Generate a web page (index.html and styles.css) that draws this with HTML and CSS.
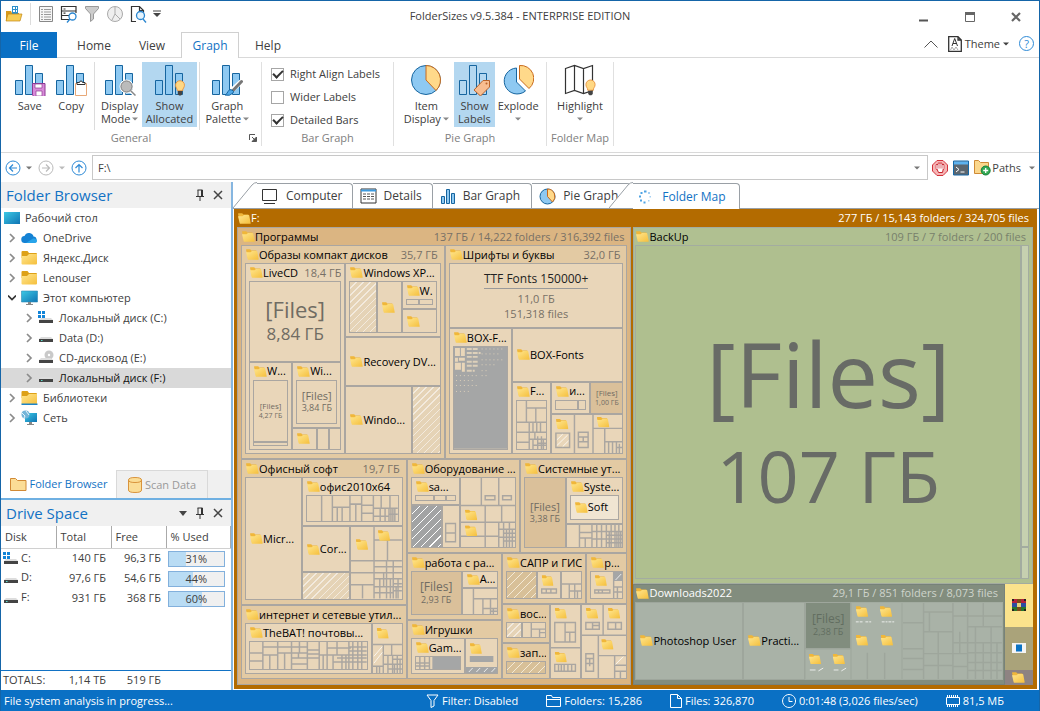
FILE: index.html
```html
<!DOCTYPE html>
<html lang="en">
<head>
<meta charset="utf-8">
<title>FolderSizes v9.5.384 - ENTERPRISE EDITION</title>
<link rel="stylesheet" href="styles.css">
</head>
<body>
<svg class="sprite" aria-hidden="true">
  <defs>
    <linearGradient id="gy" x1="0" y1="0" x2="1" y2="1"><stop offset="0" stop-color="#ffe68e"/><stop offset="1" stop-color="#f5bf3c"/></linearGradient>
    <linearGradient id="gb" x1="0" y1="0" x2="1" y2="1"><stop offset="0" stop-color="#3cc8e4"/><stop offset="1" stop-color="#0f74b4"/></linearGradient>
  </defs>
  <symbol id="f" viewBox="0 0 13 11"><path d="M0 .8q0-.6.6-.6h3.600l1.200 1.300H10q.6 0 .6.600V8L2 9.500z" fill="#f0b73a"/><path d="M0 3.200h4.500L6 2h4.500q.7 0 .8.7l1.400 7.500q.1.600-.5.600H2.500q-.6 0-.8-.6z" fill="url(#gy)"/></symbol>
  <symbol id="bars" viewBox="0 0 32 32"><g fill="#8ec9f2" stroke="#16659f"><path d="M1.500 16.500h7v14h-7zM11.500 1.500h7v29h-7zM21.500 9.500h7v21h-7z"/></g></symbol>
  <symbol id="folder" viewBox="0 0 17 16"><path d="M.5 2q0-1 1-1h5l1.500 2H15q1 0 1 1v4H.5z" fill="#dda117"/><path d="M.5 6H6l2-2h8v9.500q0 1-1 1H1.500q-1 0-1-1z" fill="url(#gy)"/></symbol>
  <symbol id="drive" viewBox="0 0 16 16"><path d="M3 7h10l2 2H1z" fill="#ddd"/><path d="M1 9h14v3H1z" fill="#444"/><path d="M3 10h1.500v1H3z" fill="#5fe0d0"/></symbol>
  <symbol id="drivec" viewBox="0 0 16 16"><path d="M3 8h10l2 2H1z" fill="#ddd"/><path d="M1 10h14v3H1z" fill="#444"/><path d="M0 1h3v3H0zM4 1h3v3H4zM0 5h3v3H0zM4 5h3v3H4z" fill="#1284d8"/></symbol>
  <symbol id="cd" viewBox="0 0 16 16"><circle cx="11" cy="5" r="4.500" fill="#c9c9c9"/><circle cx="11" cy="5" r="1.200" fill="#fff"/><path d="M3 8h10l2 2H1z" fill="#ddd"/><path d="M1 10h14v3H1z" fill="#444"/></symbol>
  <symbol id="chev" viewBox="0 0 8 10"><path d="M2 1l4 4-4 4" fill="none" stroke="#8b8b8b" stroke-width="1.700"/></symbol>
  <symbol id="down" viewBox="0 0 6 4"><path d="M0 .5h6L3 3.500z" fill="currentColor"/></symbol>
  <symbol id="pin" viewBox="0 0 10 12"><path d="M2.500 1h5M3 1v6M1 7.500h8M5 7.500V12" fill="none" stroke="#333"/><path d="M6 1h2v6H6z" fill="#333"/></symbol>
  <symbol id="x" viewBox="0 0 10 10"><path d="M1 1l8 8M9 1L1 9" stroke="#444" stroke-width="1.500"/></symbol>
  <symbol id="bulb" viewBox="0 0 12 18"><path d="M6 .8a5 5 0 0 0-5 5c0 3 2 3.500 2 6.200h6c0-2.700 2-3.200 2-6.200a5 5 0 0 0-5-5z" fill="#ffd884" stroke="#e8923c"/><path d="M3.500 12.500h5V16L7 17.500H5L3.500 16z" fill="#444"/></symbol>
  <symbol id="pie" viewBox="0 0 32 32"><circle cx="16" cy="16" r="14.500" fill="#8ec9f2" stroke="#16659f"/><path d="M16 1.500A14.500 14.500 0 0 1 26 26.500L16 16z" fill="#ffd98a" stroke="#c96a1c"/></symbol>
</svg>

<header class="title">
  <div class="quick">
    <svg width="18" height="18" viewBox="0 0 18 18"><path d="M1 6h5l1 2h7v8H1z" fill="#d99a1b"/><path d="M7 1h6v11H7z" fill="#2d8fca"/><path d="M8 2h2v2H8zM11 2h1v2h-1zM8 5h2v2H8zM11 5h1v2h-1z" fill="#fff"/><path d="M3 9h14l-2 7H1z" fill="#f7cd54" stroke="#c38716" stroke-width=".7"/></svg>
    <i class="vr"></i>
    <svg width="16" height="18" viewBox="0 0 16 18"><path d="M1.500 1.500h13v15h-13z" fill="#f6f6f6" stroke="#888"/><path d="M3 4.500h2M6 4.500h7M3 7h2M6 7h7M3 9.500h2M6 9.500h7M3 12h2M6 12h7M3 14.500h2M6 14.500h7" stroke="#999"/></svg>
    <svg width="18" height="18" viewBox="0 0 18 18"><path d="M16 8V1.500H1.500v13H9M1.500 6H16M1.500 10.500H9M3.500 4h2M3.500 8.200h2" fill="none" stroke="#333" stroke-width="1.200"/><circle cx="12.500" cy="11.500" r="3.500" fill="#fff" stroke="#2a86d0" stroke-width="1.300"/><path d="M10 14l-3 3.500" stroke="#2a86d0" stroke-width="1.300"/></svg>
    <svg width="16" height="18" viewBox="0 0 16 18"><path d="M1.500 1.500h13v2L9.500 9v5l-3 2.500V9l-5-5.500z" fill="#ccc" stroke="#999"/></svg>
    <svg width="18" height="18" viewBox="0 0 18 18"><circle cx="9" cy="9" r="7.500" fill="#eee" stroke="#aaa"/><path d="M9 2v7l5 5M9 9l-3 6" fill="none" stroke="#aaa"/></svg>
    <svg width="17" height="18" viewBox="0 0 17 18"><path d="M6 16.500H1.500v-15h8l4 4V8M9.500 1.500v4h4" fill="none" stroke="#333" stroke-width="1.200"/><circle cx="10.500" cy="10.500" r="4" fill="#e4f3fd" stroke="#2a86d0" stroke-width="1.300"/><path d="M13 14l3 3.500" stroke="#2a86d0" stroke-width="1.300"/></svg>
    <svg width="8" height="7" viewBox="0 0 8 7"><path d="M0 1h8" stroke="#444"/><path d="M0 3h8L4 7z" fill="#444"/></svg>
  </div>
  <h1>FolderSizes v9.5.384 - ENTERPRISE EDITION</h1>
  <div class="winbtns">
    <button aria-label="Minimize"><svg width="10" height="10"><path d="M0 8.500h9" stroke="#555" stroke-width="2"/></svg></button>
    <button aria-label="Maximize"><svg width="10" height="10"><path d="M.5 1h9v8.500h-9z" fill="none" stroke="#666"/><path d="M0 1.500h10" stroke="#666" stroke-width="3"/></svg></button>
    <button aria-label="Close"><svg width="10" height="10"><path d="M1 1l8 8M9 1L1 9" stroke="#666" stroke-width="2.200"/></svg></button>
  </div>
</header>

<nav class="menu">
  <button class="file">File</button><button>Home</button><button>View</button><button class="on">Graph</button><button>Help</button>
  <div class="menu-right">
    <button aria-label="Collapse ribbon"><svg width="14" height="8"><path d="M.5 7.500L7 1l6.500 6.500" fill="none" stroke="#555"/></svg></button>
    <button><svg width="14" height="16"><path d="M.7.7h9.300l3.300 3.300v11.300H.7zM10 1v3h3" fill="none" stroke="#333" stroke-width="1.300"/><path d="M4 10l2.700-7.500L9.500 10M5 7.500h3.500" fill="none" stroke="#333"/><path d="M2.500 14l1.500-3 2 3 2-3 2 3" fill="none" stroke="#aaa"/></svg>Theme<svg width="6" height="4"><use href="#down"/></svg></button>
    <button class="help" aria-label="Help">?</button>
  </div>
</nav>

<section class="ribbon">
  <div class="group general">
    <div class="items">
      <button><svg width="32" height="32"><use href="#bars"/><path d="M18.500 19.500H31v13H20l-1.500-1.500z" fill="#d88ad8" stroke="#8d3a94"/><path d="M21 20h7v4h-7zM22 27h6v5h-6z" fill="#fff" stroke="#8d3a94" stroke-width=".7"/></svg>Save</button>
      <button><svg width="32" height="32"><use href="#bars"/><path d="M20.500 19.500h11v12h-11z" fill="#fff" stroke="#e8a878"/><path d="M22 20.500h8v-2h-2.500a1.500 1.500 0 0 0-3 0H22z" fill="#fff" stroke="#333"/></svg>Copy</button>
      <i class="vr"></i>
      <button class="mid"><svg width="32" height="32"><use href="#bars"/><path d="M26 26l5 5" stroke="#fff" stroke-width="4"/><circle cx="22.500" cy="22.500" r="6.500" fill="#bbb" stroke="#fff"/><circle cx="22.500" cy="22.500" r="5.500" fill="#bbb" stroke="#888"/><path d="M26.500 26.500l5 5" stroke="#888" stroke-width="1.500"/></svg>Display<span>Mode<svg width="6" height="4"><use href="#down"/></svg></span></button>
      <button class="on wide"><svg width="32" height="32"><use href="#bars"/><use href="#bulb" x="20" y="16" width="12" height="16"/></svg>Show<span>Allocated</span></button>
      <i class="vr"></i>
      <button class="mid"><svg width="32" height="32"><use href="#bars"/><path d="M30.500 17.500l-10 9" stroke="#fff" stroke-width="5"/><path d="M30.500 17.500l-8.500 9" stroke="#777" stroke-width="3" stroke-linecap="round"/><path d="M14 31q2-1 3-3.500 1.500-3 4-1.500t1 3q-3 3.500-8 2z" fill="#4fa8e8" stroke="#16659f"/></svg>Graph<span>Palette<svg width="6" height="4"><use href="#down"/></svg></span></button>
    </div>
    <div class="gname">General<svg class="launch" width="8" height="8"><path d="M.5 6V.5H6" fill="none" stroke="#555"/><path d="M3 3l3 3M7.500 3v4.500H3z" stroke="#555" fill="#555"/></svg></div>
  </div>
  <div class="group bar">
    <div class="checks">
      <label><input type="checkbox" checked>Right Align Labels</label>
      <label><input type="checkbox">Wider Labels</label>
      <label><input type="checkbox" checked>Detailed Bars</label>
    </div>
    <div class="gname">Bar Graph</div>
  </div>
  <div class="group pies">
    <div class="items">
      <button class="wide"><svg width="32" height="32"><use href="#pie"/></svg>Item<span>Display<svg width="6" height="4"><use href="#down"/></svg></span></button>
      <button class="on"><svg width="32" height="32"><g fill="none" stroke="#16659f"><path d="M1.500 16.500h7v14h-7zM11.500 1.500h7v29h-7zM21.500 9.500h7v21h-7z"/></g><path d="M16 26l9-9.500h6.500v6.500L22.500 32z" fill="#f8bd90" stroke="#b8632a"/><circle cx="28.500" cy="19.500" r="1" fill="#b8632a"/></svg>Show<span>Labels</span></button>
      <button class="mid"><svg width="32" height="32"><path d="M14.500 4v14l9 9A13 13 0 1 1 14.500 4z" fill="#8ec9f2" stroke="#16659f"/><path d="M17.500 1.500a13 13 0 0 1 9.500 23L17.500 15z" fill="#ffd98a" stroke="#c96a1c"/></svg>Explode<span><svg width="6" height="4"><use href="#down"/></svg></span></button>
    </div>
    <div class="gname">Pie Graph</div>
  </div>
  <div class="group fmap">
    <div class="items">
      <button class="wide"><svg width="32" height="32"><path d="M1.500 4.500L10.500 1.500l9 3 9-3v25l-9 3-9-3-9 3zM10.500 1.500v25M19.500 4.500v25" fill="#fff" stroke="#333" stroke-width="1.200"/><use href="#bulb" x="21" y="15" width="11" height="17"/></svg>Highlight<span><svg width="6" height="4"><use href="#down"/></svg></span></button>
    </div>
    <div class="gname">Folder Map</div>
  </div>
</section>

<div class="address">
  <button aria-label="Back"><svg width="16" height="16"><circle cx="8" cy="8" r="7" fill="#fff" stroke="#2e8ad6"/><path d="M12 8H4.500M8 4.500L4.500 8 8 11.500" fill="none" stroke="#2e8ad6" stroke-width="1.200"/></svg></button>
  <svg width="6" height="4"><use href="#down"/></svg>
  <button aria-label="Forward"><svg width="16" height="16"><circle cx="8" cy="8" r="7" fill="#fff" stroke="#bbb"/><path d="M4 8h7.500M8 4.500L11.500 8 8 11.500" fill="none" stroke="#bbb" stroke-width="1.200"/></svg></button>
  <svg class="dim" width="6" height="4"><use href="#down"/></svg>
  <button aria-label="Up"><svg width="16" height="16"><circle cx="8" cy="8" r="7" fill="#fff" stroke="#2e8ad6"/><path d="M8 12.500V4.500M4.500 8L8 4.500 11.500 8" fill="none" stroke="#2e8ad6" stroke-width="1.200"/></svg></button>
  <div class="combo"><input type="text" value="F:\" aria-label="Path"><button aria-label="Path list"><svg width="6" height="4"><use href="#down"/></svg></button></div>
  <button aria-label="Stop"><svg width="16" height="16"><path d="M5 .5h6L15.500 5v6L11 15.500H5L.5 11V5z" fill="#f6b5b5" stroke="#d3333c"/><path d="M5 8.500V5.200M7 8V3.700M9 8V3.700M11 8.500V5" stroke="#c8202b" stroke-width="2.600" stroke-linecap="round"/><path d="M4.500 8h7l-1 4.500h-4z" fill="#fff" stroke="#c8202b"/><path d="M5 8.500V5.500M7 8.500V4M9 8.500V4M11 8.500V5.500" stroke="#fff" stroke-width="1.300" stroke-linecap="round"/></svg></button>
  <button aria-label="Console"><svg width="16" height="16"><path d="M.5 1h15v14H.5z" fill="#5c6770" stroke="#1669a8"/><path d="M1 1.500h14v3H1z" fill="#5db3f0"/><path d="M3 7l3 2.500L3 12M7.500 12h4" fill="none" stroke="#fff"/></svg></button>
  <button class="paths"><svg width="17" height="17"><path d="M.5 1.500h4l2 2h8v11H.5z" fill="#fbd78c" stroke="#cf8a35"/><circle cx="11.700" cy="11.500" r="4.500" fill="#34a853" stroke="#17803a"/><path d="M11.700 9v5M9.200 11.500h5" stroke="#fff" stroke-width="1.300"/></svg>Paths<svg width="6" height="4"><use href="#down"/></svg></button>
</div>

<main>
  <aside>
    <section class="browser">
      <h2><span>Folder Browser</span><svg width="10" height="12"><use href="#pin"/></svg><svg width="10" height="10"><use href="#x"/></svg></h2>
      <ul class="tree">
        <li class="root"><svg width="16" height="16"><path d="M0 2h16v12H0z" fill="url(#gb)"/></svg>Рабочий стол</li>
        <li><svg width="8" height="10"><use href="#chev"/></svg><svg width="17" height="16"><path d="M4 13a3.500 3.500 0 0 1-.5-7Q5 2.500 8.500 3t4 3.500a3.300 3.300 0 0 1 .5 6.500z" fill="#1482d4"/><path d="M5 13l7-4.500q4-.5 4 2.500 0 2-3 2z" fill="#28a4ea"/></svg>OneDrive</li>
        <li><svg width="8" height="10"><use href="#chev"/></svg><svg width="17" height="16"><use href="#folder"/></svg>Яндекс.Диск</li>
        <li><svg width="8" height="10"><use href="#chev"/></svg><svg width="17" height="16"><use href="#folder"/></svg>Lenouser</li>
        <li><svg width="8" height="8"><path d="M0 1.500l4 4 4-4" fill="none" stroke="#333" stroke-width="1.700"/></svg><svg width="17" height="16"><path d="M.5 1h16v11H.5z" fill="url(#gb)" stroke="#2b8ab5" stroke-width=".6"/><path d="M7 12h3v2H7zM5 14h7v1H5z" fill="#888"/></svg>Этот компьютер</li>
        <li class="sub"><svg width="8" height="10"><use href="#chev"/></svg><svg width="16" height="16"><use href="#drivec"/></svg>Локальный диск (C:)</li>
        <li class="sub"><svg width="8" height="10"><use href="#chev"/></svg><svg width="16" height="16"><use href="#drive"/></svg>Data (D:)</li>
        <li class="sub"><svg width="8" height="10"><use href="#chev"/></svg><svg width="16" height="16"><use href="#cd"/></svg>CD-дисковод (E:)</li>
        <li class="sub sel"><svg width="8" height="10"><use href="#chev"/></svg><svg width="16" height="16"><use href="#drive"/></svg>Локальный диск (F:)</li>
        <li><svg width="8" height="10"><use href="#chev"/></svg><svg width="17" height="16"><use href="#folder"/><path d="M.5 13.500h16V15H.5z" fill="#1d84c8"/></svg>Библиотеки</li>
        <li><svg width="8" height="10"><use href="#chev"/></svg><svg width="17" height="16"><path d="M4 3h12v9H4z" fill="url(#gb)"/><path d="M8 12h3v2H8zM6 14h7v1H6z" fill="#888"/><circle cx="4.500" cy="4.500" r="4" fill="#74b5d8"/><path d="M1 3l3 3-1 2M5 1l3 4" stroke="#e7f5fb" fill="none"/></svg>Сеть</li>
      </ul>
      <div class="sidetabs">
        <button class="on"><svg width="17" height="15"><path d="M.5 1.500h5l2 2h8.500v10H.5z" fill="#fbdd96" stroke="#d28a35"/></svg>Folder Browser</button>
        <button><svg width="14" height="16"><path d="M.5 3v10q0 2.500 6.500 2.500t6.500-2.500V3q0-2.500-6.500-2.500T.5 3z" fill="#fbdd96" stroke="#d9943c"/><path d="M.5 3q0 2.500 6.500 2.500T13.500 3" fill="none" stroke="#d9943c"/></svg>Scan Data</button>
      </div>
    </section>
    <section class="drives">
      <h2><span>Drive Space</span><svg width="8" height="5"><path d="M0 0h8L4 5z" fill="#444"/></svg><svg width="10" height="12"><use href="#pin"/></svg><svg width="10" height="10"><use href="#x"/></svg></h2>
      <table>
        <colgroup><col class="c1"><col class="c1"><col class="c1"><col></colgroup>
        <thead><tr><th>Disk</th><th>Total</th><th>Free</th><th>% Used</th></tr></thead>
        <tbody>
          <tr><td><svg width="16" height="16"><use href="#drivec"/></svg>C:</td><td>140 ГБ</td><td>96,3 ГБ</td><td><div class="used" style="--p:31%">31%</div></td></tr>
          <tr><td><svg width="16" height="16"><use href="#drive"/></svg>D:</td><td>97,6 ГБ</td><td>54,6 ГБ</td><td><div class="used" style="--p:44%">44%</div></td></tr>
          <tr><td><svg width="16" height="16"><use href="#drive"/></svg>F:</td><td>931 ГБ</td><td>368 ГБ</td><td><div class="used" style="--p:60%">60%</div></td></tr>
        </tbody>
      </table>
      <table class="totals"><colgroup><col class="c1"><col class="c1"><col class="c1"><col></colgroup><tbody><tr><td>TOTALS:</td><td>1,14 ТБ</td><td>519 ГБ</td><td></td></tr></tbody></table>
    </section>
  </aside>

  <section class="view">
    <nav class="tabs">
      <svg class="slant" width="24" height="26"><path d="M0 26L19 3Q21 .5 24 .5V26z" fill="#fff"/><path d="M0 26L19 3Q21 .5 24 .5" fill="none" stroke="#9aa0a6"/></svg>
      <button class="first"><svg width="17" height="16"><path d="M1.500 1.500h14v11h-14zM3 15.500h11" fill="none" stroke="#333"/></svg>Computer</button>
      <button><svg width="17" height="16"><path d="M1 1h15v14H1z" fill="#fff" stroke="#333"/><path d="M1 1.500h15v2H1z" fill="#3d9be0"/><path d="M3 6h3M7 6h3M11 6h3M3 8.500h3M7 8.500h3M11 8.500h3M3 11h3M7 11h3M11 11h3" stroke="#555"/></svg>Details</button>
      <button><svg width="16" height="16" viewBox="0 0 16 16"><path d="M1.500 8.500h3v7h-3zM6.500 1.500h3v14h-3zM11.500 5.500h3v10h-3z" fill="#8ec9f2" stroke="#16659f"/></svg>Bar Graph</button>
      <button class="pie"><svg width="17" height="17" viewBox="0 0 17 17"><circle cx="8.500" cy="8.500" r="7.500" fill="#8ec9f2" stroke="#16659f"/><path d="M8.500 1a7.500 7.500 0 0 1 5 13l-5-5.500z" fill="#ffd98a" stroke="#c96a1c"/></svg>Pie Graph</button>
      <svg class="slant over" width="24" height="26"><path d="M0 26L19 3Q21 .5 24 .5V26z" fill="#fff"/><path d="M0 26L19 3Q21 .5 24 .5" fill="none" stroke="#9aa0a6"/></svg>
      <button class="on"><svg width="16" height="16" viewBox="0 0 16 16"><path d="M7 1.500h2.500v2H7zM3.500 3h2v2h-2zM2 6.500h2v2H2zM3 10.500h2v2H3zM6.500 12.500h2v2h-2z" fill="#4fa3e3"/><path d="M11 3h2v2h-2zM12.500 7h1.500v1.500h-1.500zM11 11h1.500v1.500H11z" fill="#a5d0f2"/></svg>Folder Map</button>
    </nav>

    <div class="map">
      <div class="hd"><svg class="ic"><use href="#f"/></svg><b>F:</b><span>277 ГБ / 15,143 folders / 324,705 files</span></div>
      <div class="row" style="--g:394fr 401fr">

        <div class="t l1">
          <div class="hd"><svg class="ic"><use href="#f"/></svg><b>Программы</b><span>137 ГБ / 14,222 folders / 316,392 files</span></div>
          <div class="col" style="--g:214fr 220fr">
            <div class="row" style="--g:203fr 182fr">
              <div class="t l2">
                <div class="hd"><svg class="ic"><use href="#f"/></svg><b>Образы компакт дисков</b><span>35,7 ГБ</span></div>
                <div class="row" style="--g:100fr 95fr">
                  <div class="t l3">
                    <div class="hd"><svg class="ic"><use href="#f"/></svg><b>LiveCD</b><span>18,4 ГБ</span></div>
                    <div class="col" style="--g:80fr 87fr">
                      <div class="t file s24"><em>[Files]</em><small>8,84 ГБ</small></div>
                      <div class="row" style="--g:43fr 49fr">
                        <div class="t l3"><div class="hd"><svg class="ic"><use href="#f"/></svg><b>W...</b></div>
                          <div class="col" style="--g:60fr 4fr"><div class="t file s9"><em>[Files]</em><small>4,27 ГБ</small></div><div class="t"></div></div></div>
                        <div class="col" style="--g:65fr 22fr">
                          <div class="t l3"><div class="hd"><svg class="ic"><use href="#f"/></svg><b>Wi...</b></div>
                            <div class="col" style="--g:1fr"><div class="t file s11"><em>[Files]</em><small>3,84 ГБ</small></div></div></div>
                          <div class="row" style="--g:24fr 12fr 12fr"><div class="t leaf"><svg class="ic"><use href="#f"/></svg></div><div class="t"></div><div class="t"></div></div>
                        </div>
                      </div>
                    </div>
                  </div>
                  <div class="col" style="--g:74fr 48fr 68fr">
                    <div class="t l3">
                      <div class="hd"><svg class="ic"><use href="#f"/></svg><b>Windows XP...</b></div>
                      <div class="row" style="--g:27fr 25fr 35fr">
                        <div class="t hatch"></div>
                        <div class="t leaf"><svg class="ic"><use href="#f"/></svg></div>
                        <div class="col" style="--g:27fr 23fr">
                          <div class="t l3"><div class="hd"><svg class="ic"><use href="#f"/></svg><b>W.</b></div><div class="row" style="--g:1fr 1fr"><div class="t"></div><div class="t"></div></div></div>
                          <div class="t leaf"><svg class="ic"><use href="#f"/></svg></div>
                        </div>
                      </div>
                    </div>
                    <div class="t leaf"><svg class="ic"><use href="#f"/></svg><b>Recovery DV...</b></div>
                    <div class="row" style="--g:66fr 29fr"><div class="t leaf"><svg class="ic"><use href="#f"/></svg><b>Windo...</b></div><div class="t hatch"></div></div>
                  </div>
                </div>
              </div>

              <div class="t l2">
                <div class="hd"><svg class="ic"><use href="#f"/></svg><b>Шрифты и буквы</b><span>32,0 ГБ</span></div>
                <div class="col" style="--g:65fr 125fr">
                  <div class="t ttf"><u>TTF Fonts 150000+</u><span>11,0 ГБ</span><span>151,318 files</span></div>
                  <div class="row" style="--g:63fr 111fr">
                    <div class="t l3"><div class="hd"><svg class="ic"><use href="#f"/></svg><b>BOX-F...</b></div>
                      <div class="fit"><svg class="mo" viewBox="0 0 54 103" preserveAspectRatio="none"><path class="solid" d="M0 0h54v103H0z"/><path class="cell" d="M1 1h5v8H1zM7 1h4v8H7zM1 11h3v4H1zM5 11h6v3H5zM1 16h6v7H1zM8 16h3v9H8zM1 25h10"/><path class="dots" d="M13 2h12M13 6h14M13 10h12M13 15h11M13 19h12M13 24h8" stroke-dasharray="5 1"/><path class="dots thin" d="M28 2h24M28 7h20M28 13h22M28 18h14M28 24h8M2 29h22M2 34h20M2 39h24M2 45h16M28 29h6" stroke-dasharray="1 3"/></svg></div></div>
                    <div class="col" style="--g:53fr 72fr">
                      <div class="t leaf"><svg class="ic"><use href="#f"/></svg><b>BOX-Fonts</b></div>
                      <div class="row" style="--g:39fr 72fr">
                        <div class="t l3"><div class="hd"><svg class="ic"><use href="#f"/></svg><b>F...</b></div>
                          <div class="fit"><svg class="mo" viewBox="0 0 31 48" preserveAspectRatio="none"><path d="M10 0V21M0 21H31M10 7H31M20 7V21M0 31H13M13 21V48M0 41H13M17 21V31M21 21V31M13 31H31M25 21V31M13 38H31M19 31V38M17 38V48M22 35V48M26 35V48M22 42H31M17 44H31M28 38V48"/></svg></div></div>
                        <div class="col" style="--g:32fr 40fr">
                          <div class="row" style="--g:39fr 33fr">
                            <div class="t l3"><div class="hd"><svg class="ic"><use href="#f"/></svg><b>и...</b></div><div class="row" style="--g:23fr 9fr"><div class="t"></div><div class="t"></div></div></div>
                            <div class="t file tan s9"><em>[Files]</em><small>1,00 ГБ</small></div>
                          </div>
                          <div class="fit"><svg class="mo" viewBox="0 0 72 40" preserveAspectRatio="none"><path d="M23 0V40M42 0V40M4 19h14v15H4zM27 18h10v16H27zM27 23h10M27 28h10M32 23v5M42 14H72M54 14V40M54 28H72M58 28V40M62 28V40M66 28V40M66 34H72M69 30V40"/><path class="w" d="M5 26l6-6M5 32l11-11M11 33l6-6"/><use href="#f" x="4" y="4" width="13" height="11"/><use href="#f" x="46" y="2" width="13" height="11"/></svg></div>
                        </div>
                      </div>
                    </div>
                  </div>
                </div>
              </div>
            </div>

            <div class="row" style="--g:165fr 220fr">
              <div class="col" style="--g:146fr 74fr">
                <div class="t l2">
                  <div class="hd"><svg class="ic"><use href="#f"/></svg><b>Офисный софт</b><span>19,7 ГБ</span></div>
                  <div class="row" style="--g:57fr 101fr">
                    <div class="t leaf"><svg class="ic"><use href="#f"/></svg><b>Micr...</b></div>
                    <div class="col" style="--g:49fr 73fr">
                      <div class="t l3"><div class="hd"><svg class="ic"><use href="#f"/></svg><b>офис2010x64</b></div>
                        <div class="fit"><svg class="mo" viewBox="0 0 93 25" preserveAspectRatio="none"><path d="M15 0V25M26 0V25M44 0V25M56 0V25M68 0V25M26 11H44M36 11V25M31 11V25M44 8H56M50 8V25M56 9H68M56 17H68M68 12H93M76 0V12M85 0V12M75 12V25M68 20H84M80 12V25M84 12V25M88 12V25M84 18H93M86 12V25M90 12V25"/></svg></div></div>
                      <div class="row" style="--g:48fr 53fr">
                        <div class="col" style="--g:45fr 28fr"><div class="t leaf"><svg class="ic"><use href="#f"/></svg><b>Cor...</b></div><div class="t hatch"></div></div>
                        <div class="fit"><svg class="mo" viewBox="0 0 53 72" preserveAspectRatio="none"><path d="M24 0V72M0 34H53M24 13H53M38 13V34M0 46H24M0 58H24M12 58V72M37 34V72M24 40H37M24 46H53M44 34V46M37 40H53M24 52H53M30 52V72M24 60H53M34 46V60M44 46V72M49 52V72M41 52V72M24 66H44M44 57H53M44 64H53M47 60V72"/><use href="#f" x="5" y="12" width="13" height="11"/><use href="#f" x="28" y="3" width="13" height="11"/></svg></div>
                      </div>
                    </div>
                  </div>
                </div>
                <div class="t l2">
                  <div class="hd"><svg class="ic"><use href="#f"/></svg><b>интернет и сетевые утил...</b></div>
                  <div class="row" style="--g:127fr 31fr">
                    <div class="t l3"><div class="hd"><svg class="ic"><use href="#f"/></svg><b>TheBAT! почтовы...</b></div>
                      <div class="fit"><svg class="mo" viewBox="0 0 118 27" preserveAspectRatio="none"><path d="M13 0V27M0 11H13M0 19H13M13 5H58M13 13H28M28 0V27M20 13V27M42 0V27M28 11H58M35 11V27M50 0V11M42 16H70M49 11V16M58 0V27M42 22H58M58 8H70M58 12H70M70 0V27M70 13H118M78 0V27M88 0V13M78 6H102M84 13V27M93 13V27M100 0V27M104 0V27M109 0V27M113 0V27M100 5H118M100 9H118M84 20H118M97 13V27M88 16H118M74 13V27"/></svg></div></div>
                    <div class="fit"><svg class="mo" viewBox="0 0 31 50" preserveAspectRatio="none"><path d="M0 21H31M11 21V50M11 32H31M20 21V32M0 43H11M11 41H31M21 32V50M26 32V50M4 43V50M7 43V50M16 32V50M21 36H31M16 46H31M23 41V50M29 36V50"/><path class="w" d="M1 40L10 29M1 33L10 23"/><use href="#f" x="4" y="4" width="13" height="11"/></svg></div>
                  </div>
                </div>
              </div>

              <div class="col" style="--g:94fr 126fr">
                <div class="row" style="--g:113fr 107fr">
                  <div class="t l2">
                    <div class="hd"><svg class="ic"><use href="#f"/></svg><b>Оборудование ...</b></div>
                    <div class="row" style="--g:49fr 56fr">
                      <div class="col" style="--g:28fr 42fr">
                        <div class="t l3"><div class="hd"><svg class="ic"><use href="#f"/></svg><b>sa...</b></div><div class="row" style="--g:20fr 12fr 10fr"><div class="t"></div><div class="t"></div><div class="t"></div></div></div>
                        <div class="row" style="--g:31fr 18fr"><div class="t hatch dark"></div><div class="fit"><svg class="mo" viewBox="0 0 18 42" preserveAspectRatio="none"><path d="M3 18h11v19H3zM3 28h11"/></svg></div></div>
                      </div>
                      <div class="fit"><svg class="mo" viewBox="0 0 56 70" preserveAspectRatio="none"><path d="M21 0V28M39 0V28M0 28H56M25 18h10v4H25zM43 18h9v4h-9zM25 28V70M42 28V45M0 45H56M0 59H39M39 45V70M44 45V70M50 45V70M39 52H56M39 60H56M47 52V70M53 52V70M44 56H56M44 64H56"/><use href="#f" x="4" y="32" width="13" height="11"/><use href="#f" x="4" y="48" width="13" height="11"/></svg></div>
                    </div>
                  </div>
                  <div class="t l2">
                    <div class="hd"><svg class="ic"><use href="#f"/></svg><b>Системные ут...</b></div>
                    <div class="row" style="--g:42fr 58fr">
                      <div class="t file tan s11"><em>[Files]</em><small>3,38 ГБ</small></div>
                      <div class="col" style="--g:46fr 24fr">
                        <div class="t l3"><div class="hd"><svg class="ic"><use href="#f"/></svg><b>Syste...</b></div><div class="col" style="--g:1fr"><div class="t leaf pale"><svg class="ic"><use href="#f"/></svg><b>Soft</b></div></div></div>
                        <div class="fit"><svg class="mo" viewBox="0 0 58 24" preserveAspectRatio="none"><path d="M13 0V24M13 8H26M13 14H26M26 0V24M19 14V24M26 7H58M31 0V24M36 0V24M41 0V24M46 0V24M50 0V24M54 0V24M26 15H58M41 11H58M41 19H58M44 7V24M52 7V24M56 7V24"/></svg></div>
                      </div>
                    </div>
                  </div>
                </div>
                <div class="row" style="--g:95fr 125fr">
                  <div class="col" style="--g:67fr 59fr">
                    <div class="t l2">
                      <div class="hd"><svg class="ic"><use href="#f"/></svg><b>работа с ра...</b></div>
                      <div class="row" style="--g:51fr 36fr">
                        <div class="t file tan s12"><em>[Files]</em><small>2,93 ГБ</small></div>
                        <div class="col" style="--g:16fr 26fr"><div class="t leaf"><svg class="ic"><use href="#f"/></svg><b>A...</b></div>
                          <div class="fit"><svg class="mo" viewBox="0 0 36 26" preserveAspectRatio="none"><path d="M11 0V26M11 10H36M21 10V26M29 10V20M21 20H36M29 20V26M32 20V26M29 23H36"/></svg></div></div>
                      </div>
                    </div>
                    <div class="t l2">
                      <div class="hd"><svg class="ic"><use href="#f"/></svg><b>Игрушки</b></div>
                      <div class="row" style="--g:54fr 33fr">
                        <div class="t l3"><div class="hd"><svg class="ic"><use href="#f"/></svg><b>Gam...</b></div>
                          <div class="fit"><svg class="mo" viewBox="0 0 46 12" preserveAspectRatio="none"><path d="M4 0V12M0 6H14M9 0V12M0 9H14M14 0V12"/><path class="solid" d="M17 0h29v12H17z"/></svg></div></div>
                        <div class="fit"><svg class="mo" viewBox="0 0 33 34" preserveAspectRatio="none"><path class="solid" d="M4 17h25v6H4zM0 28h33v6H0z"/><path class="w" d="M3 33l4-4M11 33l4-4M19 33l4-4M27 33l4-4"/><use href="#f" x="4" y="4" width="13" height="11"/></svg></div>
                      </div>
                    </div>
                  </div>
                  <div class="col" style="--g:51fr 75fr">
                    <div class="row" style="--g:84fr 41fr">
                      <div class="t l2"><div class="hd"><svg class="ic"><use href="#f"/></svg><b>САПР и ГИС</b></div>
                        <div class="row" style="--g:31fr 24fr 21fr"><div class="t hatch tan"></div>
                          <div class="fit"><svg class="mo" viewBox="0 0 24 26" preserveAspectRatio="none"><path d="M4 17h16v4H4zM9 17v4M14 17v4"/><use href="#f" x="4" y="3" width="13" height="11"/></svg></div>
                          <div class="fit"><svg class="mo" viewBox="0 0 21 26" preserveAspectRatio="none"><path d="M0 12H21M8 12V26M8 19H21M14 12V26M17 19V26"/></svg></div></div></div>
                      <div class="t l2"><div class="hd"><svg class="ic"><use href="#f"/></svg><b>р...</b></div>
                        <div class="fit"><svg class="mo" viewBox="0 0 33 26" preserveAspectRatio="none"><path d="M24 0V26M4 18h16v3H4zM8 18v3M12 18v3M24 15H33M28 15V26M24 20H33"/><path class="solid" d="M24 0h9v9h-9z"/><path class="w" d="M26 8l6-6"/><use href="#f" x="4" y="3" width="13" height="11"/></svg></div></div>
                    </div>
                    <div class="row" style="--g:48fr 31fr 46fr">
                      <div class="col" style="--g:39fr 36fr">
                        <div class="t l2"><div class="hd"><svg class="ic"><use href="#f"/></svg><b>вос...</b></div><div class="row" style="--g:16fr 24fr"><div class="t hatch"></div><div class="fit"><svg class="mo" viewBox="0 0 24 16" preserveAspectRatio="none"><path d="M9 0V16M9 7H24M18 7V16M18 11H24"/></svg></div></div></div>
                        <div class="t l2"><div class="hd"><svg class="ic"><use href="#f"/></svg><b>зап...</b></div><div class="row" style="--g:1fr"><div class="t hatch tan"></div></div></div>
                      </div>
                      <div class="fit"><svg class="mo" viewBox="0 0 31 75" preserveAspectRatio="none"><path d="M0 44H31M4 18h22v20H4zM15 18v20M15 28h11M20 28v10M4 61h22v7H4zM8 61v7M11 61v7M14 61v7M18 61v7M22 61v7"/><use href="#f" x="4" y="3" width="13" height="11"/><use href="#f" x="4" y="48" width="13" height="11"/></svg></div>
                      <div class="fit"><svg class="mo" viewBox="0 0 46 75" preserveAspectRatio="none"><path d="M0 31H46M22 0V31M17 31V75M17 52H46M4 18h14v7H4zM11 18v7M11 21h7M27 18h14v7H27zM35 18v7M4 50h8v18H4zM4 55h8M4 60h8M8 55v8M34 52V75M34 62H46M34 68H46M40 68V75"/><path class="w" d="M35 61l8-8"/><use href="#f" x="4" y="3" width="13" height="11"/><use href="#f" x="27" y="3" width="13" height="11"/><use href="#f" x="20" y="35" width="13" height="11"/></svg></div>
                    </div>
                  </div>
                </div>
              </div>
            </div>
          </div>
        </div>

        <div class="col" style="--g:355fr 101fr">
          <div class="t green">
            <div class="hd"><svg class="ic"><use href="#f"/></svg><b>BackUp</b><span>109 ГБ / 7 folders / 200 files</span></div>
            <div class="row" style="--g:386fr 8fr">
              <div class="t file huge"><em>[Files]</em><small>107 ГБ</small></div>
              <div class="col light" style="--g:300fr 31fr"><div class="t"></div><div class="t"></div></div>
            </div>
          </div>
          <div class="row" style="--g:373fr 28fr">
            <div class="t gray">
              <div class="hd"><svg class="ic"><use href="#f"/></svg><b>Downloads2022</b><span>29,1 ГБ / 851 folders / 8,073 files</span></div>
              <div class="row" style="--g:108fr 62fr 46fr 51fr 101fr">
                <div class="t leaf"><svg class="ic"><use href="#f"/></svg><b>Photoshop User</b></div>
                <div class="t leaf"><svg class="ic"><use href="#f"/></svg><b>Practi...</b></div>
                <div class="col" style="--g:47fr 30fr">
                  <div class="t file dk s12"><em>[Files]</em><small>2,38 ГБ</small></div>
                  <div class="fit"><svg class="mo" viewBox="0 0 46 30" preserveAspectRatio="none"><path class="w" d="M4 21h6M13 22l5-3M29 21h5M37 22l5-3"/><use href="#f" x="3" y="4" width="13" height="11"/><use href="#f" x="28" y="4" width="13" height="11"/></svg></div>
                </div>
                <div class="fit"><svg class="mo" viewBox="0 0 51 77" preserveAspectRatio="none"><path class="w" d="M4 19h8M14 19h6M31 19h6M38 19h6" stroke-dasharray="3 1"/><path d="M16 50V77M34 50V77"/><use href="#f" x="4" y="3" width="13" height="11"/><use href="#f" x="29" y="3" width="13" height="11"/><use href="#f" x="4" y="32" width="13" height="11"/><use href="#f" x="30" y="32" width="13" height="11"/></svg></div>
                <div class="fit"><svg class="mo" viewBox="0 0 101 77" preserveAspectRatio="none"><path d="M21 0V77M0 20H21M0 46H21M0 56H21M0 67H21M21 9H51M27 9V29M21 29H51M51 0V77M51 13H101M66 0V29M82 0V24M36 29V51M21 51H66M36 51V77M21 63H51M66 24H101M58 29V51M66 29V77M51 40H101M74 24V77M82 40V77M90 24V77M66 50H101M66 60H101M66 68H101M96 40V77M51 64H66"/></svg></div>
              </div>
            </div>
            <div class="col side" style="--g:43fr 43fr 15fr">
              <div class="sw yellow"><svg width="14" height="12"><path d="M0 0h14v4H0z" fill="#b5223b"/><path d="M0 4h14v4H0z" fill="#2c4ca0"/><path d="M0 8h14v4H0z" fill="#28752c"/><path d="M5 0h4v12H5z" fill="#7b4a1a"/><path d="M5 4h4v4H5z" fill="#e6d27a"/><path d="M0 0h2v2H0zM12 0h2v2h-2zM0 10h2v2H0zM12 10h2v2h-2z" fill="#222"/></svg></div>
              <div class="sw olive"><svg width="14" height="10"><path d="M0 0h14v10H0z" fill="#f4f4f4"/><path d="M4 1.500h6v7H4z" fill="#0c73c4"/></svg></div>
              <div class="sw slate"><svg class="ic"><use href="#f"/></svg></div>
            </div>
          </div>
        </div>
      </div>
    </div>
  </section>
</main>

<footer>
  <span class="grow">File system analysis in progress...</span>
  <span><svg width="13" height="14"><path d="M1 1h11L8 6.500V12l-3 1.500v-7z" fill="none" stroke="#fff"/></svg>Filter: Disabled</span>
  <span><svg width="15" height="14"><path d="M.5 1.500h5l1 2h8v9H.5zM.5 5.500h14" fill="none" stroke="#fff"/></svg>Folders: 15,286</span>
  <span><svg width="12" height="14"><path d="M.5.5h7l4 4v9H.5zM7.500.5v4h4" fill="none" stroke="#fff"/></svg>Files: 326,870</span>
  <span><svg width="14" height="14"><path d="M7 3v4.500h3.500M7 .5a6.500 6.500 0 1 0 .1 0z" fill="none" stroke="#fff"/></svg>0:01:48 (3,026 files/sec)</span>
  <span><svg width="14" height="14"><path d="M.5 3.500h13v7H.5z" fill="none" stroke="#fff"/><path d="M1 2h12M1 12h12" stroke="#fff" stroke-dasharray="1 1" stroke-width="2"/></svg>81,5 МБ</span>
</footer>
</body>
</html>
```
FILE: styles.css
```css
* { box-sizing: border-box; }
body {
  margin: 0;
  height: 100vh;
  min-height: 640px;
  display: flex;
  flex-direction: column;
  overflow: hidden;
  background: #fff;
  border: 1px solid #1565a8;
  border-bottom: 0;
  font: 11px/16px "Open Sans", "Noto Sans", sans-serif;
  color: #404040;
}
svg { flex: none; display: block; }
.sprite { position: absolute; width: 0; height: 0; }
button { font: inherit; color: inherit; background: none; border: 0; padding: 0; margin: 0; display: flex; align-items: center; justify-content: center; }
h1, h2, ul { margin: 0; padding: 0; font-weight: 400; }
.vr { width: 1px; background: #dcdcdc; }

/* Title bar */
.title { display: grid; grid-template-columns: 1fr auto 1fr; align-items: center; height: 31px; flex: none; }
.title h1 { font-size: 11px; line-height: 16px; padding-bottom: 2px; }
.quick { display: flex; align-items: center; gap: 6px; padding: 0 0 6px 4px; }
.quick .vr { height: 22px; margin: 0 1px; }
.winbtns { display: flex; justify-content: flex-end; gap: 36px; padding-right: 18px; }

/* Menu tabs */
.menu { display: flex; height: 26px; flex: none; border-bottom: 1px solid #d9d9d9; font-size: 12px; }
.menu > button { width: 58px; height: 26px; padding-top: 1px; }
.menu > .file { width: 56px; margin-right: 8px; background: #0a70c4; color: #fff; }
.menu > .on { border: 1px solid #d0d0d0; border-bottom: 0; background: #fff; color: #1272c4; }
.menu-right { margin-left: auto; display: flex; gap: 10px; padding: 0 5px 2px 0; font-size: 11px; }
.menu-right button { gap: 3px; }
.menu-right .help { align-self: center; width: 15px; height: 15px; border: 1px solid #2e8ad6; border-radius: 50%; color: #2e8ad6; }

/* Ribbon */
.ribbon { display: flex; height: 95px; flex: none; padding: 4px 0 6px; border-bottom: 1px solid #d9d9d9; }
.group { display: flex; flex-direction: column; border-right: 1px solid #e0e0e0; }
.items { display: flex; height: 70px; justify-content: center; }
.items > .vr { margin: 0 2px; }
.items button { flex-direction: column; justify-content: flex-start; width: 42px; height: 65px; padding-top: 2px; line-height: 13px; }
.items button > svg { margin-bottom: 3px; }
.items button span { display: flex; align-items: center; gap: 2px; min-height: 13px; white-space: nowrap; }
.items button span svg { color: #888; }
.items .mid { width: 46px; }
.items .wide { width: 55px; }
.items .on { background: #b3d7f0; }
.general { padding: 0 8px; width: 261px; }
.general .items { justify-content: flex-start; }
.general .vr + .mid:last-child { width: 52px; }
.gname { display: flex; justify-content: center; color: #808080; line-height: 16px; position: relative; }
.launch { position: absolute; right: -4px; top: 4px; }
.bar { width: 132px; padding: 0 9px; }
.checks { height: 70px; display: flex; flex-direction: column; gap: 7px; padding-top: 4px; }
.checks label { display: flex; align-items: center; gap: 6px; white-space: nowrap; }
.checks input { appearance: none; display: grid; place-items: center; margin: 0; width: 13px; height: 13px; border: 1px solid #a6a6a6; background: #fff; flex: none; }
.checks input:checked::after { content: ""; width: 4px; height: 8px; border: solid #333; border-width: 0 2px 2px 0; transform: rotate(45deg); margin-top: -2px; }
.pies { width: 153px; padding: 0 5px; }
.fmap { width: 67px; }
.fmap .gname { white-space: nowrap; }

/* Address bar */
.address { display: flex; align-items: center; height: 29px; flex: none; gap: 5px; padding: 0 4px; }
.address > svg { color: #777; margin-right: 1px; }
.address > .dim { color: #bbb; }
.combo { flex: 1; display: flex; height: 25px; border: 1px solid #c8c8c8; margin-right: -1px; }
.combo input { flex: 1; min-width: 0; border: 0; padding: 0 5px; font: inherit; color: inherit; outline: 0; }
.combo button { width: 20px; color: #777; }
.paths { gap: 1px; color: #444; }
.paths svg:last-child { margin-left: 7px; color: #777; }

/* Main area */
main { flex: 1; min-height: 0; display: flex; }
aside { width: 232px; flex: none; display: flex; flex-direction: column; border-right: 2px solid #86b6e0; }
h2 { display: flex; align-items: center; gap: 8px; height: 26px; padding: 0 8px 0 5px; background: #f0f0f0; color: #1272c4; font-size: 15px; line-height: 24px; }
h2 span { flex: 1; }
.browser { height: 318px; flex: none; display: flex; flex-direction: column; border-bottom: 2px solid #6fb0e2; }
.tree { list-style: none; flex: 1; }
.tree li { display: flex; align-items: center; height: 20px; gap: 5px; padding-left: 7px; white-space: nowrap; }
.tree .root { padding-left: 3px; }
.tree .sub { padding-left: 24px; }
.tree .sel { background: #d9d9d9; color: #111; }
.sidetabs { display: flex; height: 28px; background: #f0f0f0; }
.sidetabs button { gap: 3px; width: 91px; border: 1px solid #d9d9d9; border-width: 1px 1px 0 0; color: #999; }
.sidetabs .on { width: 116px; background: #fff; border-top: 0; color: #1272c4; }
.drives { flex: 1; display: flex; flex-direction: column; }
table { width: 100%; border-collapse: collapse; table-layout: fixed; }
.c1 { width: 55px; }
th { height: 22px; padding: 0 0 0 4px; text-align: left; font-weight: 400; border-right: 1px solid #aaa; border-bottom: 1px solid #d0d0d0; }
td { height: 20px; padding: 0 5px 0 0; text-align: right; white-space: nowrap; }
td:first-child { text-align: left; padding: 0 0 0 2px; }
td:last-child { padding: 0 6px 0 2px; }
td svg { display: inline-block; vertical-align: middle; margin-right: 2px; }
.used { height: 16px; margin-top: 2px; border: 1px solid #82b0dc; text-align: center; line-height: 14px; background: linear-gradient(90deg, #b9dcf4 var(--p), #f0f0f0 var(--p)); }
.totals { margin-top: auto; border-top: 1px solid #1272c4; }

/* View tabs */
.view { flex: 1; min-width: 0; display: flex; flex-direction: column; }
.tabs { display: flex; align-items: flex-end; height: 27px; flex: none; font-size: 12px; border-bottom: 1px solid #9aa0a6; }
.tabs button { height: 25px; gap: 7px; padding: 0 9px 0 7px; border: 1px solid #9aa0a6; border-width: 1px 1px 0 0; border-radius: 0 4px 0 0; }
.tabs .first { padding-left: 4px; gap: 8px; }
.tabs .slant + button { border-left: 0; }
.tabs .over { margin-left: -22px; position: relative; }
.tabs button:nth-of-type(2) { padding-right: 10px; }
.tabs button:nth-of-type(3) { padding-right: 11px; }
.tabs .pie { padding-right: 12px; }
.tabs .on { background: #fff; height: 26px; margin-bottom: -1px; position: relative; color: #1272c4; padding: 0 13px 0 4px; gap: 9px; }

/* Folder map */
.map { flex: 1; min-height: 0; display: flex; flex-direction: column; margin: 0 2px 1px 1px; padding: 0 4px 4px 3px; background: #b36b00; --line: #aaa6a1; font-size: 11px; }
.row, .col { flex: 1; display: grid; min-width: 0; min-height: 0; }
.row { grid-template-columns: var(--g); grid-template-rows: minmax(0, 1fr); }
.col { grid-template-rows: var(--g); grid-template-columns: minmax(0, 1fr); }
.t { display: flex; flex-direction: column; min-width: 0; min-height: 0; overflow: hidden; border: 1px solid var(--line); background: #e9d6b9; }
.l1 { background: #dbb582; padding: 0 3px 5px; }
.l2 { background: #e3caa3; padding: 0 3px 4px; }
.l3 { padding: 0 3px 3px; }
.hd { flex: none; display: flex; align-items: center; height: 17px; overflow: hidden; white-space: nowrap; padding: 0 3px 0 1px; }
.hd span { margin-left: auto; color: #777066; }
.hd b, .leaf b { font-weight: 400; color: #000; }
.ic { width: 13px; height: 11px; }
.l3 > .hd { padding-right: 0; }
.map > .hd { height: 18px; color: #fff; padding: 0 4px 0 1px; }
.map > .hd b, .map > .hd span { color: #fff; }
.leaf { flex-direction: row; align-items: center; justify-content: flex-start; padding-left: 4px; white-space: nowrap; }
.pale { background: #f0e5d2; }
.hatch { background: repeating-linear-gradient(135deg, transparent 0 4px, #fff8 4px 5px) #e5d3b6; }
.hatch.dark { background: repeating-linear-gradient(135deg, #a2a3a4 0 5px, #fff 5px 6px); }
.hatch.tan { background: repeating-linear-gradient(135deg, #d8c098 0 5px, #f4ead6 5px 6px); }
.file { align-items: center; justify-content: center; color: #706c63; }
.file em, .file small { font-style: normal; white-space: nowrap; }
.file.tan { background: #dac09a; }
.s24 em { font-size: 22px; line-height: 26px; }
.s24 small { font-size: 17px; line-height: 24px; }
.s12 em { font-size: 12px; line-height: 14px; }
.s12 small, .s11 small { font-size: 9px; line-height: 12px; }
.s11 em { font-size: 11px; line-height: 13px; }
.s9 em { font-size: 8px; line-height: 10px; }
.s9 small { font-size: 7px; line-height: 9px; }
.huge { color: #686b66; padding-top: 10px; }
.huge em { font-size: 90px; line-height: 116px; }
.huge small { font-size: 72px; line-height: 88px; }
.ttf { align-items: center; justify-content: center; line-height: 15px; color: #777066; }
.ttf u { font-size: 12px; line-height: 18px; color: #222; text-decoration: none; border-bottom: 1px solid #999; margin-bottom: 2px; }
.fit { flex: 1; min-height: 0; min-width: 0; display: flex; border: 1px solid var(--line); background: #e9d6b9; }
.mo { flex: 1; width: 100%; height: 100%; min-width: 0; }
.mo path { fill: none; stroke: var(--line); stroke-width: 1.500; }
.mo .w { stroke: #fffc; stroke-width: 1; }
.mo .solid { fill: #a5a6a6; stroke: none; }
.mo .cell { fill: #e9d6b9; stroke: none; }
.mo .dots { stroke: #ddd0ba; stroke-width: 2; }
.mo .thin { stroke-width: 1; }
.green { --line: #a3aca0; background: #b0c091; padding: 0 3px 4px 1px; margin-left: 2px; }
.green .t { background: #afbf8f; }
.green .light .t { background: #c6d0b0; }
.green .hd span { color: #78806c; }
.gray { --line: #9ea69c; background: #828d7e; border-color: #77827a; padding: 0 1px 4px; margin-left: 2px; }
.gray .hd b { color: #fff; }
.gray .hd span { color: #ced4cb; padding-right: 2px; }
.gray .t, .gray .fit { background: #a9b2a7; }
.gray .fit { border-color: #a3aca1; }
.gray .file { background: #818d7e; color: #626d60; }
.sw { display: flex; align-items: center; justify-content: center; min-height: 0; }
.yellow { background: #fbe38c; }
.olive { background: #aaa37a; }
.slate { background: #8e8382; }

/* Status bar */
footer { display: flex; align-items: center; gap: 28px; height: 21px; flex: none; margin: 0 -1px; padding: 0 36px 0 4px; background: #0a70c4; color: #fff; }
footer span { display: flex; align-items: center; gap: 3px; white-space: nowrap; }
.grow { flex: 1; }
```
